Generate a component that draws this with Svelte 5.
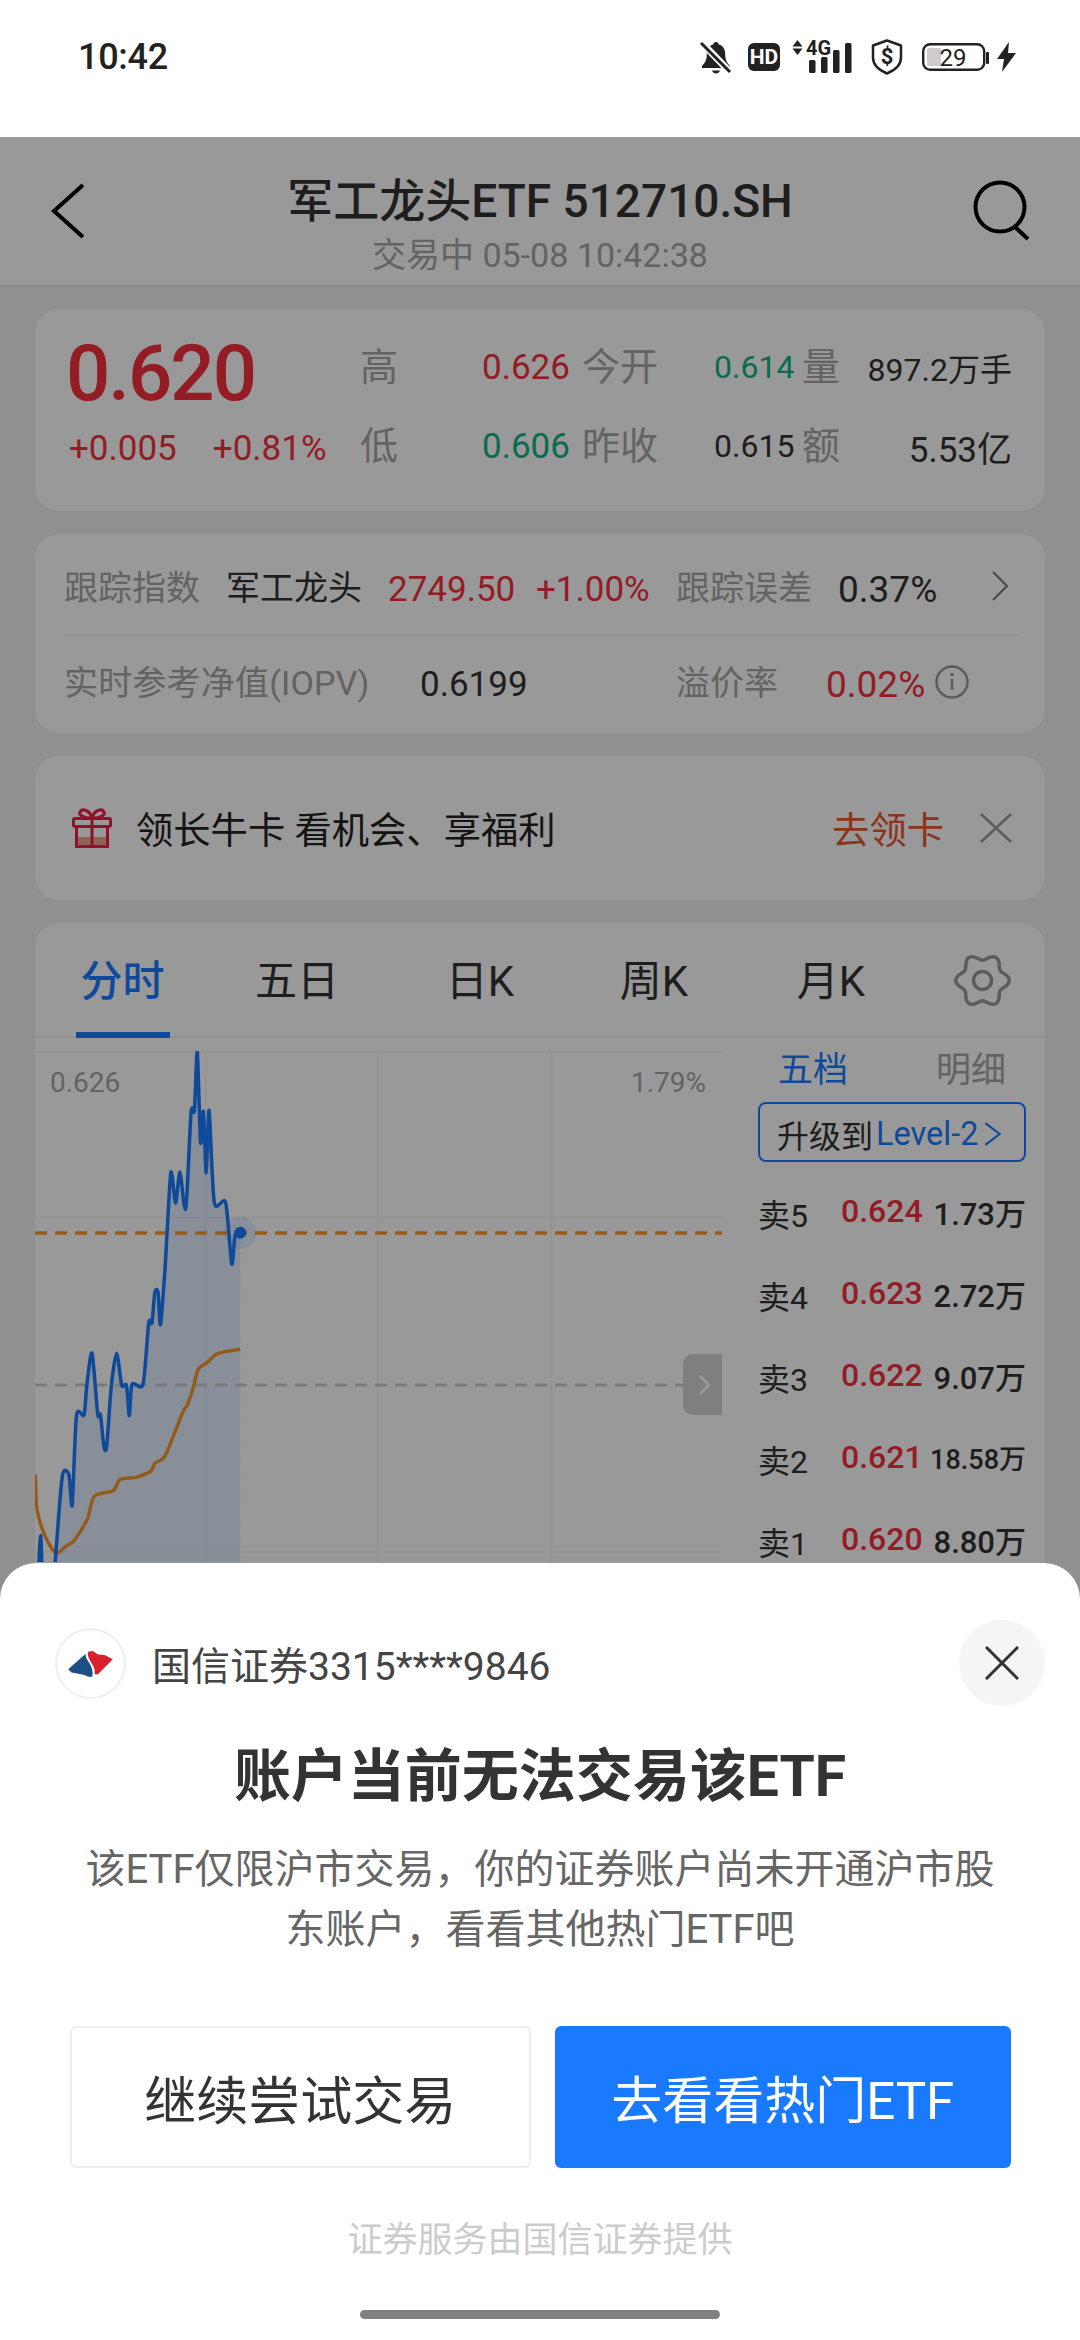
<script>
  // chart points read off the reference, in chart crop coordinates
  const toPage = ([x, y]) => [x / 2.119, 1030 + y / 2.8];

  const priceRaw = [
    [80, 1560], [86, 1415], [92, 1560], [112, 1560], [118, 1470], [132, 1250], [146, 1245], [153, 1330], [162, 1080],
    [178, 1078], [184, 995], [195, 905], [207, 1075], [213, 1078], [220, 1165], [226, 1165],
    [236, 995], [247, 905], [258, 995], [268, 995], [274, 1080], [280, 992], [303, 992],
    [315, 820], [322, 820], [328, 735], [335, 735], [340, 825], [350, 660], [362, 400],
    [372, 485], [381, 398], [390, 487], [395, 485], [405, 230], [412, 225], [418, 60],
    [425, 315], [431, 228], [437, 400], [443, 225], [454, 483], [478, 483], [491, 655],
    [498, 575], [509, 568]
  ];
  const avgRaw = [
    [75, 1245], [78, 1340], [95, 1415], [118, 1465], [140, 1445], [157, 1430], [185, 1370],
    [200, 1305], [240, 1290], [255, 1258], [290, 1252], [320, 1235], [328, 1213], [350, 1192],
    [388, 1068], [397, 1050], [410, 1000], [420, 950], [440, 930], [458, 908], [480, 900], [509, 894]
  ];

  function smooth(raw) {
    const p = raw.map(toPage);
    let d = `M${p[0][0].toFixed(1)} ${p[0][1].toFixed(1)}`;
    for (let i = 0; i < p.length - 1; i++) {
      const a = p[Math.max(i - 1, 0)];
      const b = p[i];
      const c = p[i + 1];
      const e = p[Math.min(i + 2, p.length - 1)];
      const c1 = [b[0] + (c[0] - a[0]) / 8, b[1] + (c[1] - a[1]) / 8];
      const c2 = [c[0] - (e[0] - b[0]) / 8, c[1] - (e[1] - b[1]) / 8];
      d += `C${c1[0].toFixed(1)} ${c1[1].toFixed(1)} ${c2[0].toFixed(1)} ${c2[1].toFixed(1)} ${c[0].toFixed(1)} ${c[1].toFixed(1)}`;
    }
    return d;
  }

  const pricePath = smooth(priceRaw);
  const avgPath = smooth(avgRaw);
  const end = toPage([509, 568]);
  const fillPath = `${smooth(priceRaw.slice(4))}L${end[0].toFixed(1)} 1565L${toPage([118, 0])[0].toFixed(1)} 1565Z`;

  const tabs = ['分时', '五日', '日K', '周K', '月K'];
  const asks = [
    { label: '卖5', price: '0.624', qty: '1.73万' },
    { label: '卖4', price: '0.623', qty: '2.72万' },
    { label: '卖3', price: '0.622', qty: '9.07万' },
    { label: '卖2', price: '0.621', qty: '18.58万', small: true },
    { label: '卖1', price: '0.620', qty: '8.80万' }
  ];

  // six lobed gear outline, notch at the top
  const gear = (() => {
    let d = '';
    for (let i = 0; i <= 96; i++) {
      const t = (i / 96) * Math.PI * 2;
      const r = 23.5 - 3.2 * Math.cos(6 * t);
      d += `${i ? 'L' : 'M'}${(28.5 + r * Math.sin(t)).toFixed(2)} ${(27.5 - r * Math.cos(t)).toFixed(2)}`;
    }
    return d + 'Z';
  })();
</script>

<div class="page">
  <div class="status">
    <span class="time">10:42</span>
    <div class="status-icons">
      <svg class="i-bell" viewBox="0 0 32 34" width="32" height="34">
        <path d="M16 2c1.600 0 2.600 1 2.800 2.400 4.400 1.200 6.400 5 6.400 9.600 0 5 1.200 8 4.800 12v2H2v-2c3.600-4 4.800-7 4.800-12 0-4.600 2-8.400 6.400-9.600C13.400 3 14.400 2 16 2z" fill="#222" />
        <path d="M12 30.500h8c-.6 2-2.200 3-4 3s-3.400-1-4-3z" fill="#222" />
        <path d="M2 3l28 29" stroke="#fff" stroke-width="7" />
        <path d="M1 3l29 29" stroke="#222" stroke-width="3" />
      </svg>
      <svg class="i-hd" viewBox="0 0 32 28" width="32" height="28">
        <rect width="32" height="28" rx="6" fill="#222" />
        <text x="16" y="21" text-anchor="middle" class="hd-text">HD</text>
      </svg>
      <svg class="i-signal" viewBox="0 -4 60 37" width="60" height="37">
        <path d="M5.500 0l5 6.500h-10zM5.500 15l5-6.500h-10z" fill="#222" />
        <text x="14" y="15" class="net-text">4G</text>
        <rect x="17" y="20" width="6.500" height="13" rx="1.500" fill="#222" />
        <rect x="29" y="17" width="6.500" height="16" rx="1.500" fill="#222" />
        <rect x="41" y="10" width="6.500" height="23" rx="1.500" fill="#222" />
        <rect x="53" y="3" width="6.500" height="30" rx="1.500" fill="#222" />
      </svg>
      <svg class="i-shield" viewBox="0 0 32 36" width="32" height="36">
        <path d="M16 1.500l14 5v12c0 7.500-5.500 12.500-14 16-8.500-3.500-14-8.500-14-16v-12z" fill="none" stroke="#222" stroke-width="2.500" stroke-linejoin="round" />
        <text x="16" y="25" text-anchor="middle" class="shield-text">$</text>
      </svg>
      <svg class="i-battery" viewBox="0 0 67 28" width="67" height="28">
        <rect x="1.200" y="1.200" width="61" height="25.600" rx="7" fill="none" stroke="#222" stroke-width="2.400" />
        <path d="M5 7a2 2 0 0 1 2-2h12v18H7a2 2 0 0 1-2-2z" fill="#ccc" />
        <text x="31" y="23" text-anchor="middle" class="batt-text">29</text>
        <rect x="64" y="9" width="3" height="12" rx="1" fill="#222" />
      </svg>
      <svg class="i-bolt" viewBox="0 0 19 30" width="19" height="30">
        <path d="M12 0L0 17h7l-2 13L19 11h-8z" fill="#222" />
      </svg>
    </div>
  </div>

  <header class="header">
    <svg class="back" viewBox="0 0 36 56" width="36" height="56">
      <path d="M33 2L4 28l29 26" fill="none" stroke="#000" stroke-width="4" />
    </svg>
    <div class="header-title">
      <h1>军工龙头ETF 512710.SH</h1>
      <p>交易中 05-08 10:42:38</p>
    </div>
    <svg class="search" viewBox="0 0 60 62" width="60" height="62">
      <circle cx="30" cy="27" r="24.500" fill="none" stroke="#000" stroke-width="4" />
      <path d="M45 47l13 12" stroke="#000" stroke-width="4" />
    </svg>
  </header>

  <div class="cards">
    <section class="card quote">
      <div class="big">0.620</div>
      <span class="lbl">高</span><span class="val up">0.626</span>
      <span class="lbl">今开</span><span class="val sm down">0.614</span>
      <span class="lbl">量</span><span class="val sm right">897.2万手</span>
      <div class="change"><span>+0.005</span><span>+0.81%</span></div>
      <span class="lbl">低</span><span class="val down">0.606</span>
      <span class="lbl">昨收</span><span class="val sm">0.615</span>
      <span class="lbl">额</span><span class="val right">5.53亿</span>
    </section>

    <section class="card etf">
      <div class="etf-row first">
        <span class="lbl2">跟踪指数</span>
        <span class="name">军工龙头</span>
        <span class="num up">2749.50</span>
        <span class="num up">+1.00%</span>
        <span class="lbl2">跟踪误差</span>
        <span class="num wide">0.37%</span>
        <svg viewBox="0 0 17 30" width="17" height="30"><path d="M1 1l14 14L1 29" fill="none" stroke="#777" stroke-width="2" /></svg>
      </div>
      <div class="etf-row second">
        <span class="lbl2 iopv">实时参考净值(IOPV)</span>
        <span class="num">0.6199</span>
        <span class="lbl2">溢价率</span>
        <span class="num up wide">0.02%</span>
        <svg class="info" viewBox="0 0 34 34" width="34" height="34">
          <circle cx="17" cy="17" r="15.500" fill="none" stroke="#999" stroke-width="2.500" />
          <path d="M17 14v11" stroke="#999" stroke-width="2.500" />
          <circle cx="17" cy="9.500" r="1.800" fill="#999" />
        </svg>
      </div>
    </section>

    <section class="card promo">
      <svg class="gift" viewBox="0 0 40 40" width="40" height="40">
        <path d="M4 29h32v9H4z" fill="#f2a58f" />
        <path d="M20 10c-2-8-10-10-12-6-1.500 3 4 6.500 12 6zM20 10c2-8 10-10 12-6 1.500 3-4 6.500-12 6z" fill="none" stroke="#ee1f4a" stroke-width="3" />
        <rect x="1.500" y="10.500" width="37" height="8" rx="1.500" fill="none" stroke="#ee1f4a" stroke-width="3" />
        <path d="M4.500 18.500V38.500H35.500V18.500M20 10.500v28" fill="none" stroke="#ee1f4a" stroke-width="3" />
      </svg>
      <span class="promo-text">领长牛卡 看机会、享福利</span>
      <span class="promo-go">去领卡</span>
      <svg viewBox="0 0 32 30" width="32" height="30"><path d="M1 1l30 28M31 1L1 29" stroke="#999" stroke-width="2.500" /></svg>
    </section>

    <section class="card market">
      <nav class="tabs">
        {#each tabs as tab, i}
          <span class="tab" class:active={i === 0}>{tab}</span>
        {/each}
        <span class="tab">
          <svg class="gear" viewBox="0 0 57 55" width="57" height="55">
            <path d={gear} fill="none" stroke="#999" stroke-width="3.500" stroke-linejoin="round" />
            <circle cx="28.500" cy="27.500" r="9" fill="none" stroke="#999" stroke-width="3.500" />
          </svg>
        </span>
      </nav>
      <div class="market-body">
        <svg class="chart" viewBox="35 1051 687 511" width="687" height="511">
          <path d="M35 1051.500H722M35 1217.500H722M35 1552H722M205.500 1051V1562M377.500 1051V1562M551.500 1051V1562" stroke="#f4f4f4" stroke-width="1.500" fill="none" />
          <path d={fillPath} fill="#1a7aff" fill-opacity="0.12" />
          <path d="M35 1233H722" stroke="#ff9a1f" stroke-width="3.500" stroke-dasharray="12 8" />
          <path d="M35 1385H722" stroke="#cbcbcb" stroke-width="3" stroke-dasharray="12 8" />
          <path d={avgPath} fill="none" stroke="#f4982f" stroke-width="3.500" />
          <path d={pricePath} fill="none" stroke="#1a7aff" stroke-width="3.500" stroke-linejoin="round" />
          <circle cx={end[0]} cy={end[1]} r="16" fill="#1a7aff" fill-opacity="0.12" />
          <circle cx={end[0]} cy={end[1]} r="6" fill="#1a7aff" />
          <text x="50" y="1092" class="axis">0.626</text>
          <text x="706" y="1092" text-anchor="end" class="axis">1.79%</text>
          <path d="M722 1354h-29a10 10 0 0 0-10 10v41a10 10 0 0 0 10 10h29z" fill="#d4d4d4" />
          <path d="M700 1376l9 9-9 9" fill="none" stroke="#fff" stroke-width="2.500" />
        </svg>
        <aside class="depth">
          <div class="depth-tabs"><span class="on">五档</span><span>明细</span></div>
          <div class="level">升级到<span class="level-link">Level-2</span>
            <svg viewBox="0 0 16 22" width="18" height="24"><path d="M1 1l13 10L1 21" fill="none" stroke="#1a7aff" stroke-width="2" /></svg>
          </div>
          {#each asks as ask}
            <div class="ask">
              <span class="ask-label">{ask.label}</span>
              <span class="ask-price">{ask.price}</span>
              <span class="ask-qty" class:small={ask.small}>{ask.qty}</span>
            </div>
          {/each}
        </aside>
      </div>
    </section>
  </div>

  <div class="overlay"></div>

  <section class="sheet">
    <div class="sheet-head">
      <span class="logo">
        <svg viewBox="75 50 215 215" width="71" height="71">
          <path d="M115 175L168 128C165 150 195 160 188 198L175 198L165 192L125 185Z" fill="#1d4f86" />
          <path d="M175 122L190 120L205 130L225 132L250 145L205 190L195 190C200 160 170 150 175 122Z" fill="#d9202e" />
        </svg>
      </span>
      <span class="account">国信证券3315****9846</span>
      <span class="close">
        <svg viewBox="0 0 34 34" width="34" height="34"><path d="M1 1l32 32M33 1L1 33" stroke="#333" stroke-width="3" /></svg>
      </span>
    </div>
    <h2>账户当前无法交易该ETF</h2>
    <p class="desc">该ETF仅限沪市交易，你的证券账户尚未开通沪市股<br />东账户，看看其他热门ETF吧</p>
    <div class="actions">
      <button class="btn ghost">继续尝试交易</button>
      <button class="btn primary">去看看热门ETF</button>
    </div>
    <p class="provider">证券服务由国信证券提供</p>
    <div class="home-bar"></div>
  </section>
</div>

<style>
  :global(body) {
    margin: 0;
  }

  .page {
    position: relative;
    width: 1080px;
    height: 2340px;
    overflow: hidden;
    background: #f0f0f0;
    color: #333;
    font-family: Roboto, "Noto Sans CJK SC", sans-serif;
  }

  .status {
    display: flex;
    align-items: center;
    justify-content: space-between;
    height: 137px;
    padding: 0 64px 24px 78px;
    box-sizing: border-box;
    background: #fff;
  }

  .time {
    font-size: 36px;
    font-weight: 500;
    letter-spacing: -0.3px;
    color: #222;
  }

  .status-icons {
    display: flex;
    align-items: center;
  }

  .status-icons svg {
    display: block;
  }

  .i-bell { margin-right: 16px; }
  .i-hd { margin-right: 12px; }
  .i-signal { margin: -4px 19px 0 0; }
  .i-shield { margin-right: 19px; }
  .i-battery { margin-right: 8px; }

  .hd-text {
    font: 700 21px Roboto, sans-serif;
    fill: #fff;
  }

  .net-text {
    font: 700 20px Roboto, sans-serif;
    fill: #222;
  }

  .shield-text {
    font: 700 22px Roboto, sans-serif;
    fill: #222;
  }

  .batt-text {
    font: 400 24px Roboto, sans-serif;
    fill: #222;
  }

  .header {
    display: grid;
    grid-template-columns: 1fr auto 1fr;
    align-items: center;
    height: 150px;
    padding: 0 50px;
    box-sizing: border-box;
    background: #fff;
    border-bottom: 2px solid #e6e6e6;
  }

  .search {
    justify-self: end;
  }

  .header-title {
    align-self: start;
    padding-top: 34px;
    text-align: center;
  }

  .header-title h1 {
    margin: 0;
    font-size: 46px;
    font-weight: 500;
    line-height: 60px;
    color: #333;
  }

  .header-title p {
    margin: 0;
    font-size: 34px;
    line-height: 48px;
    color: #a6a6a6;
  }

  .cards {
    display: flex;
    flex-direction: column;
    gap: 23px;
    padding: 22px 35px 0;
  }

  .card {
    background: #fff;
    border-radius: 24px;
  }

  .quote {
    display: grid;
    grid-template-columns: 294px 122px 100px 132px 88px 64px 146px;
    grid-template-rows: 78px 80px;
    align-items: center;
    height: 202px;
    padding: 19px 0 0 31px;
    box-sizing: border-box;
  }

  .big {
    padding-top: 14px;
    font-size: 78px;
    font-weight: 500;
    letter-spacing: -2px;
    line-height: 78px;
    color: #f5303f;
  }

  .change {
    display: flex;
    gap: 36px;
    padding: 4px 0 0 3px;
    font-size: 35px;
    color: #f5303f;
  }

  .lbl {
    font-size: 38px;
    line-height: 1;
    color: #a6a6a6;
  }

  .val {
    font-size: 35px;
    color: #333;
  }

  .val.sm {
    font-size: 32px;
  }

  .right {
    text-align: right;
  }

  .up { color: #f5303f; }
  .val.down { color: #11b283; }

  .etf {
    height: 199px;
    padding: 0 28px 0 29px;
    box-sizing: border-box;
  }

  .etf-row {
    display: grid;
    align-items: center;
    font-size: 35px;
    box-sizing: border-box;
  }

  .etf-row svg {
    display: block;
  }

  .first {
    grid-template-columns: 162px 162px 148px 140px 162px 154px auto;
    height: 102px;
    padding-top: 3px;
    border-bottom: 2px solid #f0f0f0;
  }

  .second {
    grid-template-columns: 356px 256px 150px 109px auto;
    height: 97px;
    padding-bottom: 8px;
  }

  .info {
    margin-top: 3px;
  }

  .lbl2 {
    font-size: 34px;
    color: #a6a6a6;
  }

  .iopv {
    letter-spacing: 0.2px;
  }

  .name {
    font-size: 34px;
    color: #333;
  }

  .num {
    padding-top: 8px;
    color: #333;
  }

  .num.wide {
    font-size: 37px;
  }

  .num.up {
    color: #f5303f;
  }

  .promo {
    display: flex;
    align-items: center;
    height: 144px;
    padding: 0 33px 0 37px;
    box-sizing: border-box;
  }

  .promo-text {
    flex: 1;
    margin-left: 24px;
    font-size: 37.300px;
    color: #222;
  }

  .promo-go {
    margin-right: 36px;
    font-size: 37.300px;
    color: #e8552e;
  }

  .market {
    height: 900px;
  }

  .tabs {
    display: grid;
    grid-template-columns: 175px 174px 192px 156px 198px 104px;
    height: 115px;
    padding-bottom: 4px;
    border-bottom: 2px solid #f0f0f0;
    box-sizing: border-box;
  }

  .tab {
    position: relative;
    display: flex;
    align-items: center;
    justify-content: center;
    font-size: 42px;
    color: #333;
  }

  .tab.active {
    font-weight: 500;
    color: #1a7aff;
  }

  .tab.active::after {
    content: "";
    position: absolute;
    left: 41px;
    bottom: -6px;
    width: 94px;
    height: 6px;
    background: #1a7aff;
  }

  .gear {
    margin-top: 5px;
  }

  .market-body {
    display: flex;
    padding-top: 13px;
  }

  .chart {
    display: block;
    flex: none;
    overflow: hidden;
  }

  .axis {
    font: 400 28px Roboto, sans-serif;
    fill: #a6a6a6;
  }

  .depth {
    flex: 1;
    margin-top: -13px;
    padding: 0 19px 0 36px;
  }

  .depth-tabs {
    display: flex;
    justify-content: space-between;
    align-items: center;
    height: 64px;
    padding: 0 20px 8px;
    box-sizing: border-box;
    font-size: 35px;
    color: #a6a6a6;
  }

  .depth-tabs .on {
    color: #1a7aff;
  }

  .level {
    display: flex;
    align-items: center;
    height: 60px;
    margin-bottom: 8px;
    padding: 3px 0 0 17px;
    box-sizing: border-box;
    border: 2px solid #1a7aff;
    border-radius: 8px;
    font-size: 32px;
    color: #333;
  }

  .level-link {
    margin: 0 6px 0 3px;
    font-size: 32.500px;
    color: #1a7aff;
  }

  .ask {
    display: grid;
    grid-template-columns: 83px 88px 1fr;
    align-items: center;
    height: 82px;
  }

  .ask-label {
    padding-top: 3px;
    font-size: 32px;
    color: #333;
  }

  .ask-price {
    font-size: 32px;
    font-weight: 500;
    color: #f5303f;
  }

  .ask-qty {
    text-align: right;
    white-space: nowrap;
    font-size: 31px;
    font-weight: 500;
    color: #333;
  }

  .ask-qty.small {
    font-size: 27px;
  }

  .overlay {
    position: absolute;
    top: 137px;
    left: 0;
    right: 0;
    bottom: 0;
    background: rgba(0, 0, 0, 0.4);
  }

  .sheet {
    position: absolute;
    left: 0;
    right: 0;
    bottom: 0;
    height: 777px;
    padding-top: 57px;
    box-sizing: border-box;
    background: #fff;
    border-radius: 36px 36px 0 0;
    text-align: center;
  }

  .sheet-head {
    display: flex;
    align-items: center;
    height: 86px;
    padding: 0 35px 0 55px;
  }

  .logo {
    display: flex;
    width: 71px;
    height: 71px;
    box-sizing: border-box;
    align-items: center;
    justify-content: center;
    border-radius: 50%;
    box-shadow: inset 0 0 0 2px #eee;
  }

  .account {
    flex: 1;
    margin-left: 26px;
    text-align: left;
    font-size: 39px;
    color: #444;
  }

  .close {
    display: flex;
    align-items: center;
    justify-content: center;
    width: 86px;
    height: 86px;
    border-radius: 50%;
    background: #f5f5f5;
  }

  .sheet h2 {
    margin: 31px 0 0;
    font-size: 57px;
    font-weight: 700;
    line-height: 80px;
    color: #333;
  }

  .desc {
    margin: 23px 0 0;
    font-size: 40px;
    line-height: 60px;
    color: #666;
  }

  .actions {
    display: flex;
    gap: 24px;
    margin-top: 66px;
    padding: 0 69px 0 70px;
  }

  .btn {
    flex: 1;
    height: 142px;
    border-radius: 6px;
    font-family: inherit;
    font-size: 51px;
  }

  .ghost {
    background: #fff;
    border: 2px solid #eee;
    font-size: 52px;
    color: #333;
  }

  .primary {
    background: #1a7aff;
    border: 0;
    color: #fff;
  }

  .provider {
    margin: 48px 0 0;
    font-size: 35px;
    line-height: 50px;
    color: #ccc;
  }

  .home-bar {
    width: 360px;
    height: 9px;
    margin: 44px auto 0;
    border-radius: 5px;
    background: #808080;
  }
</style>
